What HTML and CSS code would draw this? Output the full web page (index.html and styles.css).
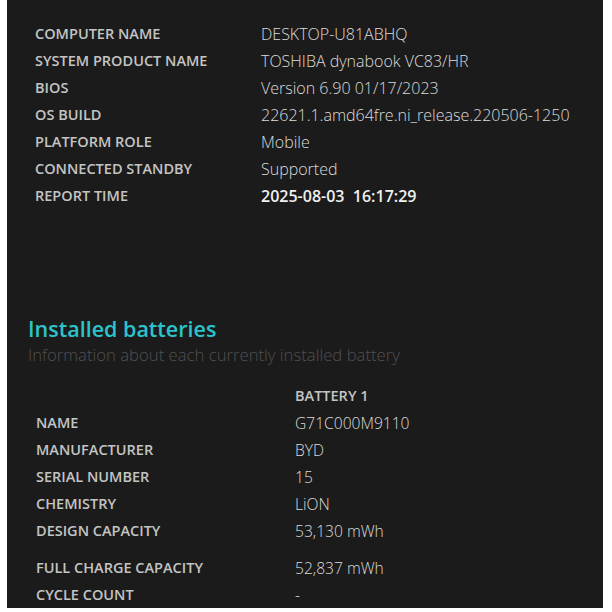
FILE: index.html
```html
<!DOCTYPE html>
<html>
<head>
<meta charset="utf-8">
<link rel="stylesheet" href="styles.css">
</head>
<body>
<div class="panel">
  <div class="info">
    <div class="label">Computer name</div><div class="value">DESKTOP-U81ABHQ</div>
    <div class="label">System product name</div><div class="value">TOSHIBA dynabook VC83/HR</div>
    <div class="label">BIOS</div><div class="value">Version 6.90 01/17/2023</div>
    <div class="label">OS build</div><div class="value">22621.1.amd64fre.ni_release.220506-1250</div>
    <div class="label">Platform role</div><div class="value">Mobile</div>
    <div class="label">Connected standby</div><div class="value">Supported</div>
    <div class="label">Report time</div><div class="value strong">2025-08-03&nbsp;&nbsp;16:17:29</div>
  </div>

  <h2 class="title">Installed batteries</h2>
  <div class="subtitle">Information about each currently installed battery</div>

  <div class="batt">
    <div class="label"></div><div class="label head">Battery 1</div>
    <div class="label">Name</div><div class="value">G71C000M9110</div>
    <div class="label">Manufacturer</div><div class="value">BYD</div>
    <div class="label">Serial number</div><div class="value">15</div>
    <div class="label">Chemistry</div><div class="value">LiON</div>
    <div class="label tall">Design capacity</div><div class="value tall">53,130 mWh</div>
    <div class="label">Full charge capacity</div><div class="value">52,837 mWh</div>
    <div class="label">Cycle count</div><div class="value">-</div>
  </div>
</div>
</body>
</html>
```

FILE: styles.css
```css
html, body {
  margin: 0;
  padding: 0;
  background: #ffffff;
}
body {
  font-family: "Open Sans", "Noto Sans", sans-serif;
}
.panel {
  margin: 0 9px 0 7px;
  height: 608px;
  box-sizing: border-box;
  background: #1b1b1b;
  padding: 20px 0 0 21px;
  overflow: hidden;
}
.info {
  display: grid;
  grid-template-columns: 226px 1fr;
  padding-left: 7px;
}
.label,
.value {
  height: 27px;
  box-sizing: border-box;
  display: flex;
  align-items: center;
  white-space: nowrap;
}
.label {
  font-size: 14.5px;
  font-weight: 600;
  text-transform: uppercase;
  color: #c4c4c4;
}
.value {
  font-size: 16px;
  font-weight: 300;
  color: #dcdcdc;
}
.batt .value {
  font-size: 15.6px;
}
.value.strong {
  font-weight: 600;
  color: #f0f0f0;
}
.title {
  margin: 106px 0 0 0;
  font-size: 21.5px;
  font-weight: 600;
  color: #2cc3cb;
  line-height: 28px;
}
.subtitle {
  font-size: 16.7px;
  font-weight: 300;
  color: #505050;
  line-height: 24px;
}
.batt {
  display: grid;
  grid-template-columns: 259px 1fr;
  padding-left: 8px;
  margin-top: 15px;
}
.tall {
  height: 37px;
  padding-bottom: 10px;
}
```
